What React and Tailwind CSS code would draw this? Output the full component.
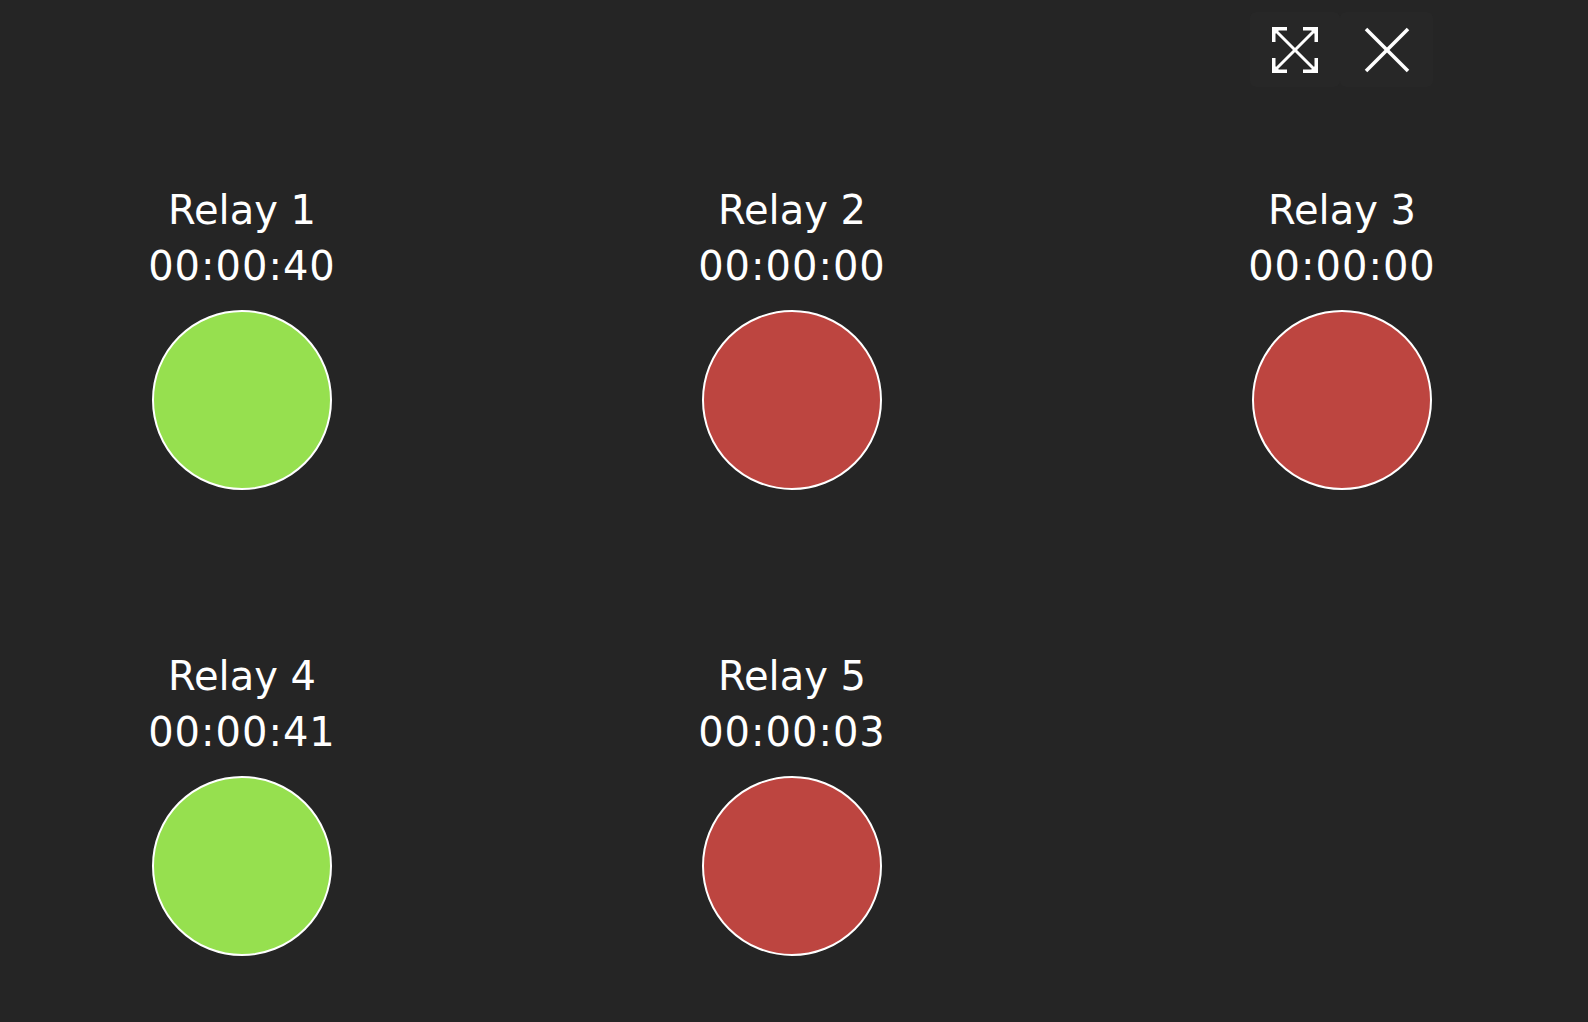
import React from 'react';

const relays = [
  { name: 'Relay 1', time: '00:00:40', on: true },
  { name: 'Relay 2', time: '00:00:00', on: false },
  { name: 'Relay 3', time: '00:00:00', on: false },
  { name: 'Relay 4', time: '00:00:41', on: true },
  { name: 'Relay 5', time: '00:00:03', on: false },
];

// expand arrows, drawn to match the corner heads of the original
const ExpandIcon = () => (
  <svg width="46" height="46" viewBox="0 0 46 46" fill="none" stroke="white">
    <line x1="4" y1="4" x2="42" y2="42" strokeWidth="3" />
    <line x1="42" y1="4" x2="4" y2="42" strokeWidth="3" />
    <g fill="white" stroke="none">
      <polygon points="0,0 15,0 15,3.5 3.5,3.5 3.5,15 0,15" />
      <polygon points="0,0 10,0 0,10" />
      <polygon points="46,0 31,0 31,3.5 42.5,3.5 42.5,15 46,15" />
      <polygon points="46,0 36,0 46,10" />
      <polygon points="0,46 15,46 15,42.5 3.5,42.5 3.5,31 0,31" />
      <polygon points="0,46 10,46 0,36" />
      <polygon points="46,46 31,46 31,42.5 42.5,42.5 42.5,31 46,31" />
      <polygon points="46,46 36,46 46,36" />
    </g>
  </svg>
);

const CloseIcon = () => (
  <svg width="46" height="46" viewBox="0 0 46 46" fill="none" stroke="white" strokeWidth="3.5">
    <line x1="2" y1="2" x2="44" y2="44" />
    <line x1="44" y1="2" x2="2" y2="44" />
  </svg>
);

const RelayCell = ({ relay }) => (
  <div className="w-[300px] flex flex-col items-center">
    <div className="text-[40px] leading-[56px] text-white">{relay.name}</div>
    <div className="text-[40px] leading-[56px] text-white tracking-[1px]">{relay.time}</div>
    <div
      className={
        'mt-[16px] w-[180px] h-[180px] rounded-full border-2 border-white ' +
        (relay.on ? 'bg-[#96e04f]' : 'bg-[#bd4540]')
      }
    />
  </div>
);

export default function App() {
  const rows = [relays.slice(0, 3), relays.slice(3)];

  return (
    <div
      className="min-h-screen w-full bg-[#252525] overflow-hidden"
      style={{ fontFamily: '"DejaVu Sans", Verdana, sans-serif' }}
    >
      {/* top controls */}
      <div className="flex justify-end pt-[12px] pr-[155px]">
        <button className="w-[90px] h-[75px] flex items-center justify-center rounded-md bg-[#272727]">
          <ExpandIcon />
        </button>
        <button className="w-[93px] h-[75px] flex items-center justify-center rounded-md bg-[#272727]">
          <CloseIcon />
        </button>
      </div>

      {/* relay grid */}
      <div className="flex flex-col gap-[158px] pt-[95px] pl-[92px]">
        {rows.map((row, i) => (
          <div key={i} className="flex gap-[250px]">
            {row.map((r) => (
              <RelayCell key={r.name} relay={r} />
            ))}
          </div>
        ))}
      </div>
    </div>
  );
}
